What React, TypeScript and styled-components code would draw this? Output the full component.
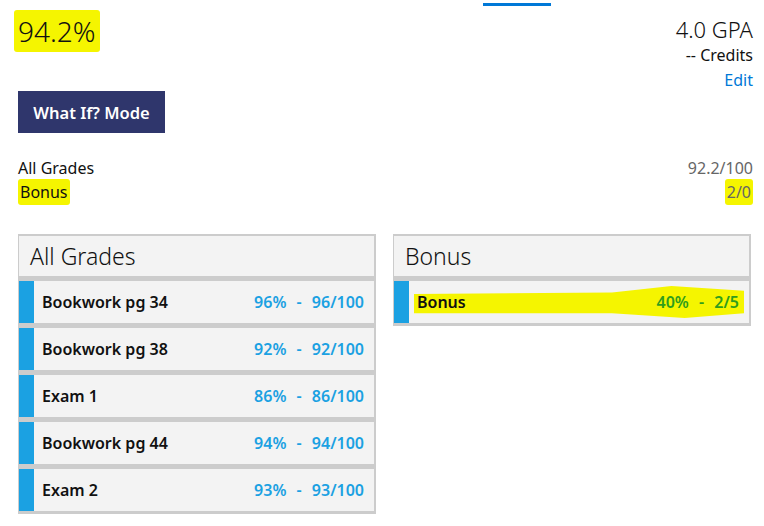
import styled, { createGlobalStyle } from 'styled-components';

const GlobalStyle = createGlobalStyle`
  body {
    margin: 0;
    background: #ffffff;
    font-family: 'Noto Sans', 'Open Sans', sans-serif;
    color: #111111;
  }
`;

const Page = styled.div`
  width: 764px;
  height: 526px;
  overflow: hidden;
  padding: 0 11px 0 18px;
  box-sizing: border-box;
  display: flex;
  flex-direction: column;
`;

const TabLine = styled.div`
  margin: 3px 0 0 465px;
  width: 68px;
  height: 3px;
  background: #0078d7;
`;

const TopRow = styled.div`
  display: flex;
  justify-content: space-between;
  align-items: flex-start;
`;

const Mark = styled.span<{ $pad?: string }>`
  background: #f5f500;
  padding: ${(p) => p.$pad || '2px 3px'};
  border-radius: 3px;
`;

const Percent = styled.div`
  margin: 7px 0 0 -4px;
  font-size: 28px;
  font-weight: 300;
  line-height: 36px;
`;

const GpaBox = styled.div`
  display: flex;
  flex-direction: column;
  align-items: flex-end;
  margin-top: 9px;
`;

const Gpa = styled.div`
  font-size: 22px;
  font-weight: 300;
  line-height: 28px;
`;

const Small = styled.div<{ $color?: string }>`
  font-size: 16px;
  font-weight: 400;
  line-height: 25px;
  color: ${(p) => p.$color || '#111111'};
`;

const ModeButton = styled.button`
  margin-top: -2px;
  width: 147px;
  height: 42px;
  border: none;
  background: #2f366c;
  color: #ffffff;
  font-family: 'Noto Sans', sans-serif;
  font-size: 16.5px;
  font-weight: 600;
  cursor: pointer;
  padding: 0;
`;

const Summary = styled.div`
  margin-top: 24px;
  display: grid;
  grid-template-columns: 1fr auto;
  row-gap: 2px;
  font-size: 16px;
  font-weight: 400;
  line-height: 22px;
`;

const SummaryValue = styled.div`
  text-align: right;
  color: #666666;
`;

const Cards = styled.div`
  margin-top: 31px;
  display: flex;
  gap: 17px;
  align-items: flex-start;
`;

const Card = styled.div`
  width: 358px;
  background: #cccccc;
  padding: 2px 2px 3px 1px;
  box-sizing: border-box;
  display: flex;
  flex-direction: column;
  gap: 5px;
`;

const CardHeader = styled.div`
  height: 40px;
  background: #f3f3f3;
  padding-left: 11px;
  font-size: 23px;
  font-weight: 300;
  line-height: 40px;
`;

const Row = styled.div`
  position: relative;
  height: 42px;
  background: #f3f3f3;
  display: flex;
  align-items: center;
`;

const Stripe = styled.div`
  width: 15px;
  align-self: stretch;
  background: #1ba1e2;
`;

const RowName = styled.div`
  position: relative;
  flex: 1;
  padding-left: 8px;
  font-size: 16px;
  font-weight: 600;
`;

const RowScore = styled.div<{ $color: string }>`
  position: relative;
  padding-right: 10px;
  font-size: 16px;
  font-weight: 600;
  word-spacing: 6px;
  color: ${(p) => p.$color};
  white-space: pre;
`;

const MarkerStroke = styled.div`
  position: absolute;
  left: 20px;
  right: 5px;
  top: 5px;
  bottom: 5px;
  background: #f5f500;
  clip-path: polygon(0 25%, 60% 20%, 78% 0, 100% 15%, 100% 85%, 82% 100%, 60% 85%, 0 85%);
`;

const grades = [
  { name: 'Bookwork pg 34', score: '96% - 96/100' },
  { name: 'Bookwork pg 38', score: '92% - 92/100' },
  { name: 'Exam 1', score: '86% - 86/100' },
  { name: 'Bookwork pg 44', score: '94% - 94/100' },
  { name: 'Exam 2', score: '93% - 93/100' },
];

const App = () => {
  return (
    <Page>
      <GlobalStyle />
      <TabLine />
      <TopRow>
        <Percent>
          <Mark $pad="2px 4px">94.2%</Mark>
        </Percent>
        <GpaBox>
          <Gpa>4.0 GPA</Gpa>
          <Small>-- Credits</Small>
          <Small $color="#0078d7">Edit</Small>
        </GpaBox>
      </TopRow>
      <div>
        <ModeButton>What If? Mode</ModeButton>
      </div>
      <Summary>
        <div>All Grades</div>
        <SummaryValue>92.2/100</SummaryValue>
        <div>
          <Mark $pad="2px 2px">Bonus</Mark>
        </div>
        <SummaryValue>
          <Mark $pad="2px 2px">2/0</Mark>
        </SummaryValue>
      </Summary>
      <Cards>
        <Card>
          <CardHeader>All Grades</CardHeader>
          {grades.map((g) => (
            <Row key={g.name}>
              <Stripe />
              <RowName>{g.name}</RowName>
              <RowScore $color="#1ba1e2">{g.score}</RowScore>
            </Row>
          ))}
        </Card>
        <Card>
          <CardHeader>Bonus</CardHeader>
          <Row>
            <Stripe />
            <MarkerStroke />
            <RowName>Bonus</RowName>
            <RowScore $color="#2f9e1c">{'40% - 2/5'}</RowScore>
          </Row>
        </Card>
      </Cards>
    </Page>
  );
};

export default App;
